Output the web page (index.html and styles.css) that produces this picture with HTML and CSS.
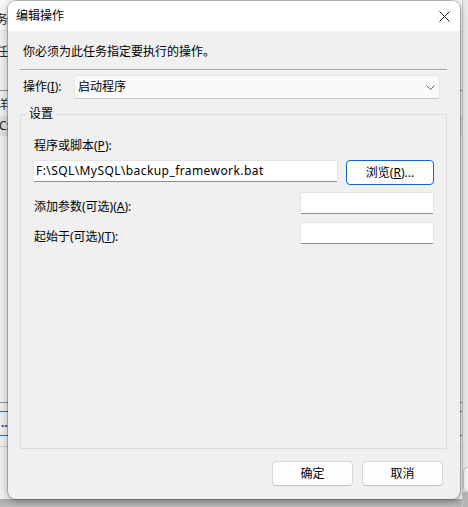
FILE: index.html
```html
<!DOCTYPE html>
<html lang="zh-CN">
<head>
<meta charset="utf-8">
<title>编辑操作</title>
<link rel="stylesheet" href="styles.css">
</head>
<body>
<div class="bg">
  <div class="bg-main">
    <div class="bg-head"><span class="frag">务</span></div>
    <div class="bg-task"><span class="frag">任</span></div>
    <div class="bg-detail"><span class="frag">详</span></div>
    <div class="bg-sel"><span class="frag2">C:</span></div>
    <div class="bg-fill"></div>
    <div class="bg-list">
      <div class="bg-list-row"><span class="frag3">..</span></div>
    </div>
    <div class="bg-tail"></div>
    <div class="bg-bottom"></div>
  </div>
  <div class="bg-right">
    <div class="bg-right-fill"></div>
    <div class="bg-right-btn"></div>
    <div class="bg-right-tail"></div>
  </div>
</div>

<div class="dialog">
  <div class="titlebar">
    <span class="title">编辑操作</span>
    <svg class="close" width="11" height="11" viewBox="0 0 11 11"><path d="M0.5 0.5 L10.5 10.5 M10.5 0.5 L0.5 10.5" stroke="#1b1b1b" stroke-width="1" fill="none"/></svg>
  </div>
  <div class="body">
    <p class="intro">你必须为此任务指定要执行的操作。</p>
    <div class="sep"></div>
    <div class="action">
      <span class="action-label">操作(<u>I</u>):</span>
      <div class="combo">
        <span>启动程序</span>
        <svg width="9" height="5" viewBox="0 0 9 5"><path d="M0.5 0.5 L4.5 4.5 L8.5 0.5" stroke="#606060" stroke-width="1" fill="none"/></svg>
      </div>
    </div>
    <div class="group">
      <span class="group-title">设置</span>
      <div class="field-label">程序或脚本(<u>P</u>):</div>
      <div class="prog-row">
        <div class="input prog">F:\SQL\MySQL\backup_framework.bat</div>
        <div class="btn browse">浏览(<u>R</u>)...</div>
      </div>
      <div class="arg-row">
        <span class="arg-label">添加参数(可选)(<u>A</u>):</span>
        <div class="input small"></div>
      </div>
      <div class="arg-row">
        <span class="arg-label">起始于(可选)(<u>T</u>):</span>
        <div class="input small"></div>
      </div>
    </div>
    <div class="buttons">
      <div class="btn">确定</div>
      <div class="btn">取消</div>
    </div>
  </div>
</div>
</body>
</html>
```

FILE: styles.css
```css
html, body {
  margin: 0;
  padding: 0;
}

body {
  width: 468px;
  height: 507px;
  overflow: hidden;
  position: relative;
  background: #f0f0f0;
  font-family: "Noto Sans", "Noto Sans CJK SC", sans-serif;
  font-size: 12px;
  line-height: 16px;
  color: #000;
}

/* ---------- background window ---------- */
.bg {
  position: absolute;
  inset: 0;
  display: flex;
}

.bg-main {
  width: 462px;
  display: flex;
  flex-direction: column;
  background: #f0f0f0;
  border-right: 1px solid #c9c9c9;
}

.frag, .frag2, .frag3 {
  display: block;
  margin-left: -4px;
  color: #222;
}

.frag2 {
  margin-left: -1px;
}

.bg-head {
  height: 31px;
  padding-top: 12px;
  box-sizing: border-box;
  background: #f6f6f6;
  border-bottom: 1px solid #e4e4e4;
}

.bg-task {
  height: 60px;
  padding-top: 13px;
  box-sizing: border-box;
  border-bottom: 1px solid #8c8c8c;
}

.bg-detail {
  height: 25px;
  padding-top: 6px;
  box-sizing: border-box;
}

.bg-sel {
  height: 20px;
  padding-top: 2px;
  box-sizing: border-box;
  background: #dedede;
}

.bg-fill {
  flex: 1;
}

.bg-list {
  height: 44px;
  border-top: 1px solid #8e8e8e;
  padding-top: 8px;
  box-sizing: border-box;
}

.bg-list-row {
  height: 25px;
  box-sizing: border-box;
  border-top: 1px solid #1a6fc4;
  border-bottom: 1px solid #1a6fc4;
  padding-top: 3px;
}

.frag3 {
  margin-left: 1px;
  color: #3a2a6a;
  font-weight: bold;
}

.bg-tail {
  height: 52px;
  border-top: 1px solid #cfcfcf;
}

.bg-bottom {
  height: 8px;
  background: linear-gradient(#a9a9a9, #bdbdbd);
}

.bg-right {
  flex: 1;
  display: flex;
  flex-direction: column;
  background: #e9e9e9;
}

.bg-right-fill {
  height: 467px;
}

.bg-right-btn {
  height: 25px;
  box-sizing: border-box;
  border: 1px solid #c4c4c4;
  border-radius: 4px;
  margin-right: -6px;
  background: #f4f4f4;
}

.bg-right-tail {
  flex: 1;
  background: #b5b5b5;
}

/* ---------- dialog ---------- */
.dialog {
  position: absolute;
  left: 8px;
  top: 1px;
  width: 452px;
  height: 498px;
  display: flex;
  flex-direction: column;
  background: #f0f0f0;
  border-radius: 8px;
  overflow: hidden;
  box-shadow: 0 0 0 1px rgba(0, 0, 0, 0.22), 0 2px 9px rgba(0, 0, 0, 0.32);
}

.titlebar {
  flex: none;
  height: 30px;
  background: #fff;
  display: flex;
  align-items: center;
  justify-content: space-between;
  padding: 0 10px 0 8px;
}

.close {
  display: block;
}

.body {
  flex: 1;
  display: flex;
  flex-direction: column;
  padding: 13px 13px 13px 12px;
  min-height: 0;
}

.intro {
  margin: 0 0 9px 3px;
}

.sep {
  border-top: 1px solid #a0a0a0;
  border-bottom: 1px solid #fbfbfb;
}

.action {
  display: flex;
  align-items: center;
  margin-top: 4px;
  padding-right: 7px;
}

.action-label {
  flex: none;
  width: 54px;
  padding-left: 3px;
  box-sizing: border-box;
}

.combo {
  flex: 1;
  height: 24px;
  box-sizing: border-box;
  display: flex;
  align-items: center;
  justify-content: space-between;
  padding: 0 4px 0 3px;
  background: #fafafa;
  border: 1px solid #e6e6e6;
  border-bottom-color: #cacaca;
  border-radius: 3px;
}

.group {
  flex: 1;
  margin-top: 15px;
  display: flex;
  flex-direction: column;
  border: 1px solid #dcdcdc;
  padding: 0 12px 0 13px;
}

.group-title {
  align-self: flex-start;
  margin: -9px 0 0 -7px;
  padding: 0 2px;
  background: #f0f0f0;
}

.field-label {
  margin-top: 16px;
}

.prog-row {
  display: flex;
  align-items: flex-start;
  gap: 8px;
  margin-top: 6px;
  margin-left: -1px;
}

.input {
  box-sizing: border-box;
  background: #fff;
  border: 1px solid #e3e3e3;
  border-bottom-color: #8d8d8d;
  border-radius: 2px;
}

.input.prog {
  flex: 1;
  height: 22px;
  padding: 2px 0 0 2px;
  letter-spacing: 0.42px;
  white-space: nowrap;
  overflow: hidden;
}

.btn {
  box-sizing: border-box;
  width: 81px;
  height: 25px;
  display: flex;
  align-items: center;
  justify-content: center;
  background: #fdfdfd;
  border: 1px solid #d5d5d5;
  border-bottom-color: #c2c2c2;
  border-radius: 4px;
}

.btn.browse {
  flex: none;
  width: 88px;
  border: 1px solid #0a68c8;
  border-radius: 4px;
}

.arg-row {
  display: flex;
  justify-content: space-between;
  align-items: flex-start;
  margin-top: 7px;
}

.arg-label {
  margin-top: 7px;
}

.input.small {
  width: 134px;
  height: 22px;
}

.buttons {
  display: flex;
  justify-content: flex-end;
  gap: 9px;
  margin-top: 12px;
  margin-right: 4px;
}
```
